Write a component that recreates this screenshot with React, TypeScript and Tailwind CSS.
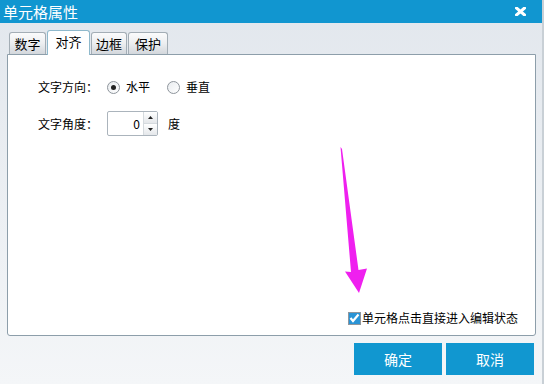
import React from "react";

const cjk = { fontFamily: '"Noto Sans CJK SC", "Noto Sans", sans-serif' };

function Tab({ label, active, w }: { label: string; active?: boolean; w: string }) {
  if (active) {
    return (
      <div
        className={`${w} h-[25px] -mb-px relative z-10 bg-white border border-b-0 border-[#8fb9cc] rounded-t-[3px] flex items-center justify-center text-[13px] text-black`}
      >
        <span className="-mt-[3px]">{label}</span>
      </div>
    );
  }
  return (
    <div
      className={`${w} h-[22px] bg-gradient-to-b from-[#fbfbfc] via-[#eceef0] to-[#d3d7dc] border border-[#a3adb5] border-b-0 rounded-t-[3px] flex items-center justify-center text-[13px] text-black`}
    >
      {label}
    </div>
  );
}

function Radio({ checked }: { checked?: boolean }) {
  return (
    <div className="w-[13px] h-[13px] rounded-full border border-[#8e959c] bg-gradient-to-br from-[#e9ecef] to-[#ffffff] flex items-center justify-center">
      {checked && <div className="w-[5px] h-[5px] rounded-full bg-[#222]" />}
    </div>
  );
}

export default function App() {
  return (
    <div className="w-[544px] h-[384px] flex overflow-hidden" style={cjk}>
      <div className="w-[542px] h-[384px] flex flex-col bg-gradient-to-b from-[#e2e7ed] to-[#f4f6f8] relative">
        {/* Title bar */}
        <div className="h-[23px] bg-[#1196d0] flex items-center justify-between pl-[3px] pr-[16px] shrink-0">
          <span className="text-white text-[15px] leading-none">单元格属性</span>
          <svg width="11" height="9" viewBox="0 0 11 9">
            <path d="M1.5 1 L9.5 8 M9.5 1 L1.5 8" stroke="white" strokeWidth="3" strokeLinecap="square" />
          </svg>
        </div>

        {/* Tabs */}
        <div className="flex items-end gap-px ml-[9px] mt-[7px] h-[24px]">
          <Tab label="数字" w="w-[37px]" />
          <Tab label="对齐" active w="w-[43px]" />
          <Tab label="边框" w="w-[36px]" />
          <Tab label="保护" w="w-[40px]" />
        </div>

        {/* Panel */}
        <div className="ml-[7px] w-[529px] h-[282px] bg-white border border-[#8d9eaa] rounded-b-[3px] flex flex-col text-[12px] text-black">
          <div className="flex flex-col gap-[12px] pl-[30px] pt-[20px]">
            <div className="flex items-center h-[24px]">
              <span className="w-[69px]">文字方向：</span>
              <Radio checked />
              <span className="ml-[6px]">水平</span>
              <div className="ml-[17px]">
                <Radio />
              </div>
              <span className="ml-[6px]">垂直</span>
            </div>
            <div className="flex items-center h-[25px]">
              <span className="w-[69px]">文字角度：</span>
              <div className="w-[51px] h-[25px] border border-[#abb4bc] rounded-[2px] flex bg-white">
                <div className="flex-1 flex items-center justify-end pr-[3px] text-[12px]">0</div>
                <div className="w-[14px] flex flex-col border-l border-[#d5dade]">
                  <div className="flex-1 flex items-center justify-center bg-gradient-to-b from-[#ffffff] to-[#e4e7ea] border-b border-[#d5dade]">
                    <svg width="5" height="3" viewBox="0 0 5 3"><path d="M2.5 0 L5 3 L0 3 Z" fill="#222" /></svg>
                  </div>
                  <div className="flex-1 flex items-center justify-center bg-gradient-to-b from-[#ffffff] to-[#e4e7ea]">
                    <svg width="5" height="3" viewBox="0 0 5 3"><path d="M0 0 L5 0 L2.5 3 Z" fill="#222" /></svg>
                  </div>
                </div>
              </div>
              <span className="ml-[10px]">度</span>
            </div>
          </div>

          <div className="mt-auto self-end mr-[17px] mb-[8px] flex items-center gap-[1px]">
            <div className="w-[13px] h-[13px] border border-[#8f969d] bg-[#2a94d6] flex items-center justify-center">
              <svg width="11" height="10" viewBox="0 0 11 10">
                <path d="M1.5 5 L4 8 L9.5 1.5" stroke="white" strokeWidth="2.2" fill="none" />
              </svg>
            </div>
            <span className="text-[12px]">单元格点击直接进入编辑状态</span>
          </div>
        </div>

        {/* Buttons */}
        <div className="flex justify-end gap-[4px] mt-[7px] mr-[8px]">
          <div className="w-[88px] h-[32px] bg-[#1197d0] text-white text-[14px] flex items-center justify-center">确定</div>
          <div className="w-[88px] h-[32px] bg-[#1197d0] text-white text-[14px] flex items-center justify-center">取消</div>
        </div>

        {/* Annotation arrow */}
        <svg className="absolute left-0 top-0 pointer-events-none" width="542" height="384" viewBox="0 0 542 384">
          <polygon
            points="340.5,147 342,149 358.5,270 367,268.5 359,293 345,271.5 351,272"
            fill="#ef20ef"
          />
        </svg>
      </div>
      <div className="w-[2px] h-[384px] bg-[#c9d0d6]" />
    </div>
  );
}
